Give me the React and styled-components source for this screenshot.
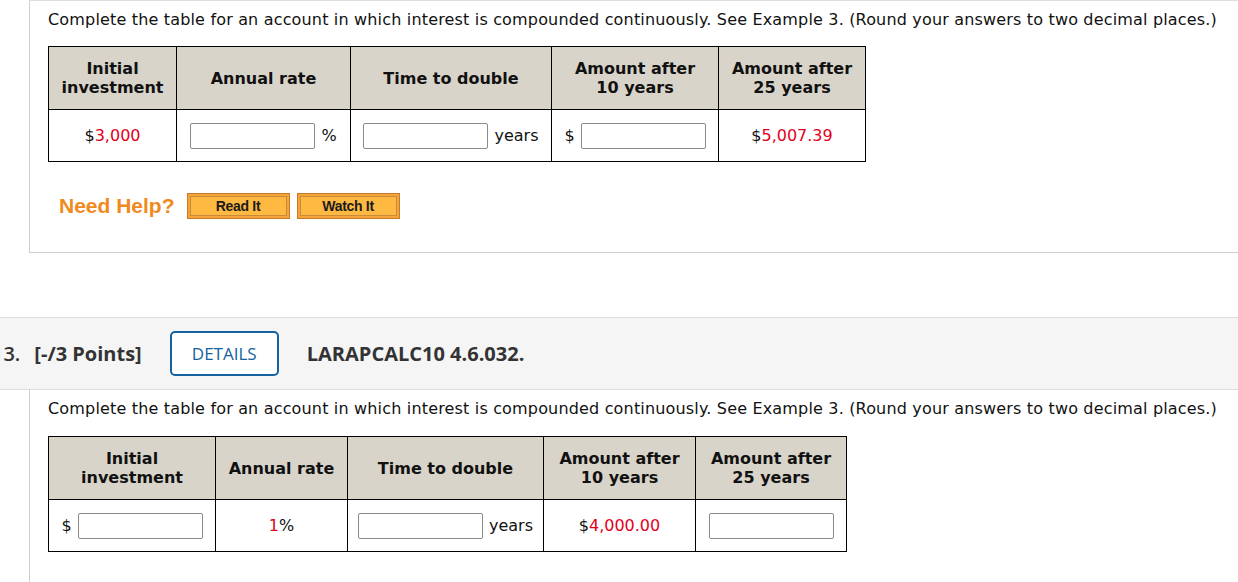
import React from 'react';
import styled, { createGlobalStyle } from 'styled-components';

const GlobalStyle = createGlobalStyle`
  html, body {
    margin: 0;
    padding: 0;
    background: #ffffff;
    overflow: hidden;
  }
  body {
    font-family: "DejaVu Sans", Verdana, sans-serif;
    color: #000;
  }
`;

// --- layout ---

const Page = styled.div`
  display: flex;
  flex-direction: column;
  width: 1238px;
`;

const QuestionBody = styled.div`
  margin-left: 29px;
  border-left: 1px solid #cfcfcf;
  border-top: ${(p) => (p.$top ? '1px solid #dedede' : 'none')};
  border-bottom: ${(p) => (p.$bottom ? '1px solid #cfcfcf' : 'none')};
  padding: ${(p) => p.$pad};
  height: ${(p) => p.$height};
  box-sizing: border-box;
`;

const Prompt = styled.p`
  margin: 0 0 ${(p) => p.$gap} 0;
  font-size: 16px;
  line-height: 19px;
  letter-spacing: 0.17px;
  color: #111;
  white-space: nowrap;
`;

// --- table ---

const Grid = styled.table`
  border-collapse: collapse;
  border: 1px solid #000;
  table-layout: fixed;
`;

const HeadCell = styled.th`
  background: #d8d4c9;
  border: 1px solid #000;
  height: 63px;
  padding: 0 4px;
  font-size: 16px;
  line-height: 19px;
  font-weight: bold;
  text-align: center;
  color: #111;
  box-sizing: border-box;
`;

const Cell = styled.td`
  border: 1px solid #000;
  height: 52px;
  padding: 0 ${(p) => p.$padX || '8px'};
  font-size: 16px;
  text-align: center;
  color: #111;
  white-space: nowrap;
  box-sizing: border-box;
`;

const CellRow = styled.span`
  display: inline-flex;
  align-items: center;
  gap: 6px;
`;

const AnswerInput = styled.input`
  width: 125px;
  height: 26px;
  box-sizing: border-box;
  border: 1px solid #8a8a8a;
  border-radius: 2px;
  background: #fff;
  padding: 0 4px;
  font-size: 14px;
  margin: 0;
`;

const Given = styled.span`
  color: #e3001b;
`;

// --- help row ---

const HelpRow = styled.div`
  display: flex;
  align-items: center;
  gap: 7px;
  margin-top: 31px;
  padding-left: 11px;
`;

const HelpLabel = styled.span`
  font-family: "Liberation Sans", Arial, sans-serif;
  font-weight: bold;
  font-size: 21px;
  color: #f18a1e;
  margin-right: 5px;
`;

const HelpButton = styled.button`
  width: 103px;
  height: 26px;
  box-sizing: border-box;
  border: 1px solid #c47a26;
  box-shadow: inset 0 0 0 2px #f6a43a, inset 0 0 0 3px #c98a3a;
  background: #fdb941;
  font-family: "Liberation Sans", Arial, sans-serif;
  font-weight: bold;
  font-size: 14px;
  color: #1b1b1b;
  padding: 0;
  letter-spacing: -0.3px;
`;

// --- question header band ---

const HeaderBand = styled.div`
  margin-top: 64px;
  height: 73px;
  box-sizing: border-box;
  background: #f5f5f5;
  border-top: 1px solid #dddddd;
  border-bottom: 1px solid #dddddd;
  display: flex;
  align-items: center;
  font-family: "Open Sans", "Noto Sans", sans-serif;
  color: #333;
`;

const Number = styled.span`
  font-weight: 600;
  font-size: 20px;
  margin-left: -8px;
  margin-right: 14px;
`;

const Points = styled.span`
  font-weight: 700;
  font-size: 20px;
  margin-right: 28px;
`;

const DetailsButton = styled.button`
  width: 109px;
  height: 45px;
  box-sizing: border-box;
  border: 2px solid #16629e;
  border-radius: 5px;
  background: #fff;
  color: #16629e;
  font-family: "Open Sans", "Noto Sans", sans-serif;
  font-weight: 500;
  font-size: 17px;
  padding: 0;
  margin-right: 28px;
`;

const Code = styled.span`
  font-weight: 700;
  font-size: 20px;
  color: #333;
`;

const Amount = ({ digits }) => (
  <span>
    $<Given>{digits}</Given>
  </span>
);

const headers = [
  <>Initial<br />investment</>,
  'Annual rate',
  'Time to double',
  <>Amount after<br />10 years</>,
  <>Amount after<br />25 years</>,
];

const HeaderRow = ({ widths }) => (
  <tr>
    {headers.map((h, i) => (
      <HeadCell key={i} style={{ width: widths[i] }}>{h}</HeadCell>
    ))}
  </tr>
);

export default function App() {
  return (
    <Page>
      <GlobalStyle />

      <QuestionBody $top $bottom $pad="9px 0 0 18px" $height="253px">
        <Prompt $gap="17px">
          Complete the table for an account in which interest is compounded continuously. See Example 3. (Round your answers to two decimal places.)
        </Prompt>
        <Grid>
          <thead>
            <HeaderRow widths={[128, 174, 201, 167, 147]} />
          </thead>
          <tbody>
            <tr>
              <Cell><Amount digits="3,000" /></Cell>
              <Cell>
                <CellRow><AnswerInput /> %</CellRow>
              </Cell>
              <Cell>
                <CellRow><AnswerInput /> years</CellRow>
              </Cell>
              <Cell $padX="10px">
                <CellRow>$ <AnswerInput /></CellRow>
              </Cell>
              <Cell><Amount digits="5,007.39" /></Cell>
            </tr>
          </tbody>
        </Grid>
        <HelpRow>
          <HelpLabel>Need Help?</HelpLabel>
          <HelpButton>Read It</HelpButton>
          <HelpButton>Watch It</HelpButton>
        </HelpRow>
      </QuestionBody>

      <HeaderBand>
        <Number>13.</Number>
        <Points>[-/3 Points]</Points>
        <DetailsButton>DETAILS</DetailsButton>
        <Code>LARAPCALC10 4.6.032.</Code>
      </HeaderBand>

      <QuestionBody $pad="9px 0 0 18px" $height="200px">
        <Prompt $gap="18px">
          Complete the table for an account in which interest is compounded continuously. See Example 3. (Round your answers to two decimal places.)
        </Prompt>
        <Grid>
          <thead>
            <HeaderRow widths={[167, 132, 196, 152, 151]} />
          </thead>
          <tbody>
            <tr>
              <Cell $padX="8px">
                <CellRow>$ <AnswerInput /></CellRow>
              </Cell>
              <Cell><Given>1</Given>%</Cell>
              <Cell>
                <CellRow><AnswerInput /> years</CellRow>
              </Cell>
              <Cell><Amount digits="4,000.00" /></Cell>
              <Cell><AnswerInput /></Cell>
            </tr>
          </tbody>
        </Grid>
      </QuestionBody>
    </Page>
  );
}
